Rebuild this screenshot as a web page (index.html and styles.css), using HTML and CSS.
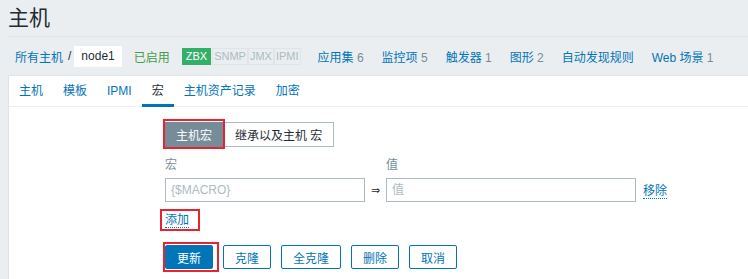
FILE: index.html
```html
<!DOCTYPE html>
<html lang="zh">
<head>
<meta charset="utf-8">
<title>主机</title>
<link rel="stylesheet" href="styles.css">
</head>
<body>
<div class="page">
  <header class="head"><h1>主机</h1></header>
  <nav class="hostnav">
    <a class="link">所有主机</a><span class="sep">/</span><span class="crumb-cur">node1</span>
    <span class="status">已启用</span>
    <span class="badges"><span class="badge on">ZBX</span><span class="badge">SNMP</span><span class="badge">JMX</span><span class="badge">IPMI</span></span>
    <a class="link nav-item">应用集 <span class="cnt">6</span></a>
    <a class="link nav-item">监控项 <span class="cnt">5</span></a>
    <a class="link nav-item">触发器 <span class="cnt">1</span></a>
    <a class="link nav-item">图形 <span class="cnt">2</span></a>
    <a class="link nav-item">自动发现规则</a>
    <a class="link nav-item">Web 场景 <span class="cnt">1</span></a>
  </nav>
  <div class="panel">
    <ul class="tabs">
      <li class="tab">主机</li>
      <li class="tab">模板</li>
      <li class="tab">IPMI</li>
      <li class="tab active">宏</li>
      <li class="tab">主机资产记录</li>
      <li class="tab">加密</li>
    </ul>
    <div class="form">
      <div class="seg">
        <span class="mark mark-seg"><button class="seg-btn active">主机宏</button></span><button class="seg-btn wide">继承以及主机 宏</button>
      </div>
      <div class="labels"><span class="lbl lbl-macro">宏</span><span class="lbl">值</span></div>
      <div class="row">
        <input class="field f-macro" placeholder="{$MACRO}">
        <span class="arrow">⇒</span>
        <input class="field f-value" placeholder="值">
        <a class="act remove">移除</a>
      </div>
      <div class="add"><span class="mark mark-add"><a class="act">添加</a></span></div>
      <div class="btns">
        <span class="mark mark-btn"><button class="btn primary">更新</button></span>
        <button class="btn">克隆</button>
        <button class="btn">全克隆</button>
        <button class="btn">删除</button>
        <button class="btn">取消</button>
      </div>
    </div>
  </div>
</div>
</body>
</html>
```

FILE: styles.css
```css
html, body {
  margin: 0;
  background: #ebeef0;
  overflow: hidden;
}
body {
  font: 12px "Liberation Sans", Arial, "Noto Sans CJK SC", sans-serif;
  color: #1f2c33;
}
.page {
  padding-left: 8px;
}
.head {
  height: 36px;
  border-bottom: 1px solid #dfe4e7;
}
.head h1 {
  margin: 0;
  font-size: 21px;
  font-weight: normal;
  line-height: 36px;
  color: #1f2c33;
}
.hostnav {
  height: 38px;
  display: flex;
  align-items: center;
  padding-left: 7px;
  white-space: nowrap;
}
.link {
  color: #0275b8;
  text-decoration: none;
}
.sep {
  margin: 0 3px 0 5px;
  color: #1f2c33;
}
.crumb-cur {
  background: #fff;
  height: 21px;
  line-height: 21px;
  padding: 0 7px;
  color: #1f2c33;
}
.status {
  margin-left: 12px;
  color: #429e47;
}
.badges {
  display: flex;
  margin-left: 12px;
  margin-right: 17px;
}
.badge {
  font-size: 11px;
  height: 15px;
  line-height: 15px;
  padding: 0 1px;
  border: 1px solid #dfe4e7;
  background: #ebeef0;
  color: #acbbc2;
}
.badge.on {
  background: #34af67;
  border-color: #34af67;
  color: #fff;
  padding: 0 3px;
  margin-right: 1px;
}
.nav-item {
  margin-right: 18px;
}
.cnt {
  color: #768d99;
}
.panel {
  background: #fff;
  border: 1px solid #dfe4e7;
  border-right: 0;
  height: 210px;
}
.tabs {
  display: flex;
  margin: 0;
  padding: 0;
  list-style: none;
  height: 30px;
  border-bottom: 1px solid #ebeef0;
}
.tab {
  position: relative;
  padding: 0 10px;
  line-height: 30px;
  color: #0275b8;
}
.tab.active {
  color: #1f2c33;
}
.tab.active::after {
  content: "";
  position: absolute;
  left: 0;
  right: 0;
  bottom: -1px;
  height: 3px;
  background: #0275b8;
}
.form {
  padding: 15px 0 0 156px;
}
.seg {
  display: flex;
}
.seg-btn {
  font: inherit;
  height: 25px;
  padding: 0 10px;
  margin: 0;
  border: 1px solid #acbbc2;
  background: #fff;
  color: #1f2c33;
  display: block;
}
.seg-btn.wide {
  padding: 0 11px;
}
.seg-btn.active {
  background: #768d99;
  border-color: #768d99;
  color: #fff;
}
.mark {
  position: relative;
  display: inline-block;
}
.mark::after {
  content: "";
  position: absolute;
  border: 2px solid #e8232f;
  pointer-events: none;
}
.mark-seg::after {
  left: -2px;
  right: -2px;
  top: -3px;
  bottom: -2px;
}
.labels {
  display: flex;
  margin-top: 10px;
  line-height: 16px;
  color: #768d99;
}
.lbl-macro {
  width: 221px;
}
.row {
  display: flex;
  align-items: center;
  margin-top: 5px;
}
.field {
  box-sizing: border-box;
  height: 24px;
  border: 1px solid #acbbc2;
  padding: 0 5px;
  margin: 0;
  font: inherit;
  color: #1f2c33;
}
.field::placeholder {
  color: #acbbc2;
}
.f-macro {
  width: 200px;
}
.f-value {
  width: 250px;
}
.arrow {
  width: 21px;
  text-align: center;
  font-family: "DejaVu Sans", sans-serif;
  font-size: 11px;
  color: #1f2c33;
}
.act {
  color: #0275b8;
  text-decoration: none;
  border-bottom: 1px dotted #0275b8;
}
.remove {
  margin-left: 7px;
}
.add {
  margin-top: 10px;
  line-height: 16px;
}
.mark-add::after {
  left: -5px;
  right: -11px;
  top: -3px;
  bottom: -3px;
}
.btns {
  display: flex;
  margin-top: 17px;
}
.btn {
  font: inherit;
  height: 24px;
  padding: 0 11px;
  margin: 0 10px 0 0;
  border: 1px solid #0275b8;
  background: #fff;
  color: #0275b8;
  border-radius: 2px;
  display: block;
}
.btn.primary {
  background: #0275b8;
  color: #fff;
}
.mark-btn {
  margin-right: 10px;
}
.mark-btn .btn {
  margin: 0;
}
.mark-btn::after {
  left: -2px;
  right: -6px;
  top: -3px;
  bottom: -3px;
}
```
